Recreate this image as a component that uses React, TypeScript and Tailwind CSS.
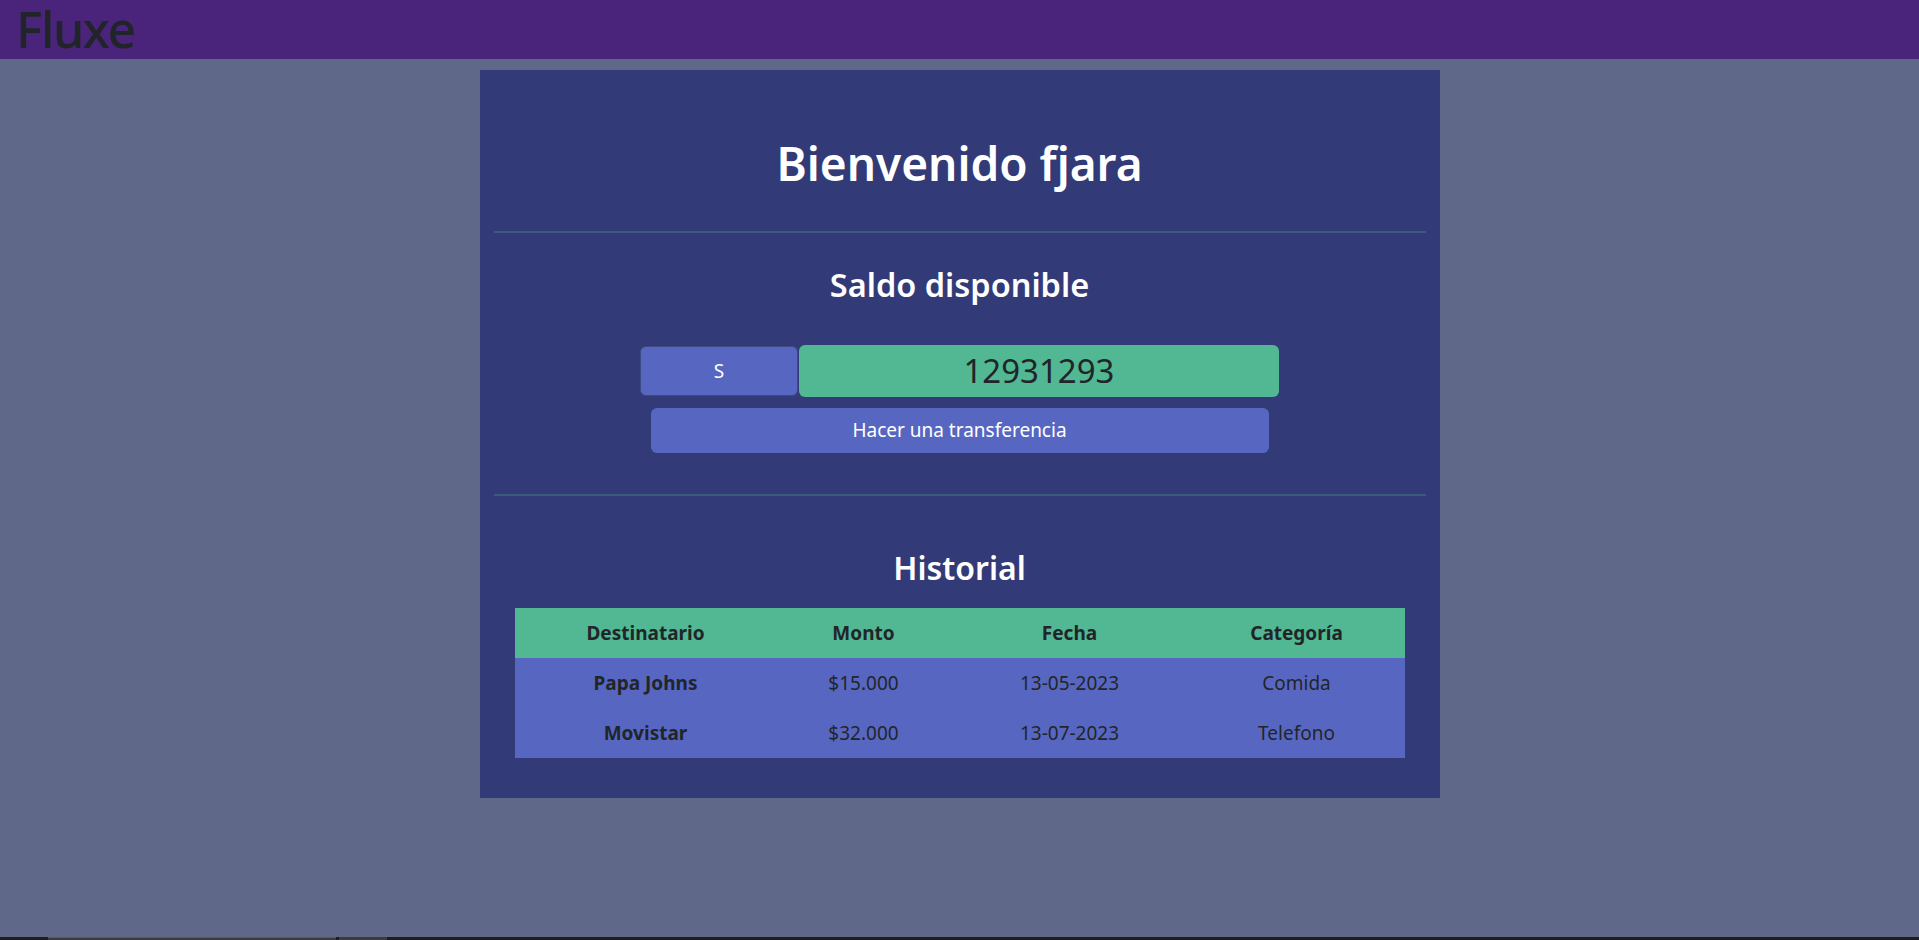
import React from 'react';

const movimientos = [
  { destinatario: 'Papa Johns', monto: '$15.000', fecha: '13-05-2023', categoria: 'Comida' },
  { destinatario: 'Movistar', monto: '$32.000', fecha: '13-07-2023', categoria: 'Telefono' },
];

const FONT = "font-['Noto_Sans','Open_Sans',sans-serif]";

export default function App() {
  return (
    <div className={`min-h-screen bg-[#5f6888] ${FONT}`}>
      <nav className="h-[59px] bg-[#4a247a] px-[16px] flex items-center">
        <span className="text-[50px] leading-[59px] font-medium text-[#212529] tracking-[-1.5px]">Fluxe</span>
      </nav>

      <main className="flex justify-center pt-[11px]">
        <section className="w-[960px] bg-[#323b77] px-[14px] pb-[40px] text-center">
          <h1 className="mt-[63px] text-[46px] leading-[60px] font-semibold text-white">Bienvenido fjara</h1>
          <div className="mt-[38px] h-[2px] bg-[#3b5b7c]" />

          <h2 className="mt-[32px] text-[32.5px] leading-[40px] font-semibold text-white">Saldo disponible</h2>

          <div className="mt-[40px] flex justify-center">
            <div className="w-[158px] h-[50px] mt-px flex items-center justify-center rounded-[6px] border border-[#3e4a86] bg-[#5767c1] text-white text-[19px]">
              S
            </div>
            <div className="w-[480px] h-[52px] ml-px flex items-center justify-center rounded-[6px] bg-[#52b793] text-[#212529] text-[33px]">
              12931293
            </div>
          </div>

          <div className="mt-[11px] flex justify-center">
            <button className="w-[618px] h-[45px] rounded-[6px] bg-[#5767c1] text-white text-[19px]">
              Hacer una transferencia
            </button>
          </div>

          <div className="mt-[41px] h-[2px] bg-[#3b5b7c]" />

          <h2 className="mt-[50px] text-[32px] leading-[44px] font-semibold text-white">Historial</h2>

          <div className="mt-[18px] px-[21px]">
            <table className="w-full border-collapse text-[19px] text-[#212529]">
              <thead>
                <tr className="h-[50px] bg-[#52b793]">
                  <th className="w-[262px] font-bold">Destinatario</th>
                  <th className="w-[174px] font-bold">Monto</th>
                  <th className="w-[238px] font-bold">Fecha</th>
                  <th className="font-bold">Categoría</th>
                </tr>
              </thead>
              <tbody>
                {movimientos.map((m) => (
                  <tr key={m.destinatario} className="h-[50px] bg-[#5767c1]">
                    <td className="font-bold">{m.destinatario}</td>
                    <td>{m.monto}</td>
                    <td>{m.fecha}</td>
                    <td>{m.categoria}</td>
                  </tr>
                ))}
              </tbody>
            </table>
          </div>
        </section>
      </main>

      <div className="fixed bottom-0 left-0 right-0 h-[3px] bg-[#1e1e1e] flex">
        <div className="ml-[48px] w-[288px] bg-[#3c3c3c] border-t border-[#5a5a5a]" />
        <div className="ml-[3px] w-[48px] bg-[#3c3c3c]" />
      </div>
    </div>
  );
}
